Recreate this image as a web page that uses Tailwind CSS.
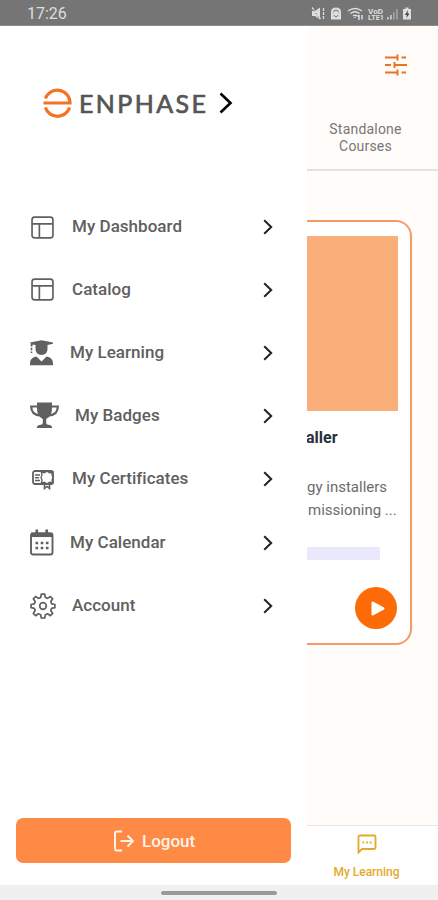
<!DOCTYPE html>
<html lang="en">
<head>
<meta charset="utf-8">
<title>My Learning</title>
<script src="https://cdn.jsdelivr.net/npm/@tailwindcss/browser@4"></script>
</head>
<body class="font-['Roboto',sans-serif]">
<svg class="hidden">
  <symbol id="chev" viewBox="0 0 10 16"><path d="M1.2 1.2 8.2 8l-7 6.8" fill="none" stroke="currentColor" stroke-width="2"/></symbol>
  <symbol id="board" viewBox="0 0 22 22"><g fill="none" stroke="currentColor" stroke-width="1.6"><rect x="1" y="1" width="20" height="20" rx="2.5"/><path d="M1 7.5h20M8 7.5V21"/></g></symbol>
</svg>
<div class="flex h-[900px] w-[438px] flex-col overflow-hidden bg-white">
  <header class="flex h-[26px] shrink-0 items-center justify-between border-b border-[#8d8d8d] bg-[#757575] pr-[25px] pl-[27px] text-[#dedede]">
    <span class="pt-[3px] text-[16px] leading-5">17:26</span>
    <svg class="mt-[2px] h-4 w-[102px]" viewBox="0 0 102 16" fill="currentColor">
      <path d="M1 5h3l5-3.500v12L4 10H1z"/><path d="M1 2l9 12" stroke="#757575" stroke-width="1"/><path d="M1 1.500l8.500 11.500M12.500 2v11" stroke="currentColor" stroke-width="1.300" stroke-dasharray="3 1"/>
      <path d="M20 6q0-4.500 5-4.500T30 6v7.500H20z"/><path d="M22.500 6.500a2.500 2.500 0 0 1 5 0M22.500 9l2.500 2 2.500-2" fill="none" stroke="#757575"/>
      <g fill="none" stroke="currentColor" stroke-width="1.500"><path d="M37 5q7-5 14 0M39.500 7.500q4.500-3.500 9 0M42 10q2-1.500 4 0"/><path d="M44 12v-1M48 14V9m-1.500 1.500L48 9M51 9v4.500"/></g>
      <text x="57" y="7.500" font-size="7" font-weight="700" textLength="15" lengthAdjust="spacingAndGlyphs">VoD</text><text x="57" y="14" font-size="7" font-weight="700" textLength="16" lengthAdjust="spacingAndGlyphs">LTE1</text>
      <path opacity=".8" d="M76 11h1.800v2.500H76zM79 9h1.800v4.500H79z"/><path opacity=".4" d="M82 6h1.800v7.500H82zM85 3h1.800v10.500H85z"/>
      <path d="M92 3h2.500V1.500h3V3h2.500v10.500h-8z"/><path fill="#444" d="M97 4l-3 5h1.800L95.500 12l3-4.500h-2z"/>
    </svg>
  </header>

  <div class="flex h-[859px] shrink-0">
    <aside class="flex w-[307px] shrink-0 flex-col bg-white text-[#606060]">
      <div class="mt-[58px] flex h-[38px] items-center pl-[43px]">
        <svg class="h-[30px] w-[29px] shrink-0" viewBox="0 0 29 30" fill="none" stroke="#f37320" stroke-width="3.200"><path d="M2.400 10.500A12.700 12.700 0 0 1 27 15H.5M2.400 19.500A12.700 12.700 0 0 0 26.600 19.500"/></svg>
        <span class="ml-[7px] w-[132px] font-['Lato',sans-serif] text-[25px] leading-[38px] font-normal tracking-[2.400px] whitespace-nowrap text-[#555] [-webkit-text-stroke:0.700px_#555]">ENPHASE</span>
        <svg class="ml-[8px] h-[22px] w-[14px] text-black" viewBox="0 0 14 22" fill="none" stroke="currentColor" stroke-width="2.600"><path d="m1.500 1.500 10 9.500-10 9.500"/></svg>
      </div>

      <nav class="mt-[74px] flex flex-col text-[17px] font-medium tracking-[0.030px]">
        <a class="flex h-[62px] items-center pr-[34px] pl-[31px]"><svg class="mr-[18px] h-[23px] w-[23px]"><use href="#board"/></svg><span>My Dashboard</span><svg class="ml-auto h-4 w-[10px] text-[#222]"><use href="#chev"/></svg></a>
        <a class="flex h-[63px] items-center pr-[34px] pl-[31px]"><svg class="mr-[18px] h-[23px] w-[23px]"><use href="#board"/></svg><span>Catalog</span><svg class="ml-auto h-4 w-[10px] text-[#222]"><use href="#chev"/></svg></a>
        <a class="flex h-[63px] items-center pr-[34px] pl-[30px]"><svg class="mr-[16px] h-[26px] w-6" viewBox="0 0 24 26" fill="currentColor"><path d="M0 2.500 11.500.2 23 2.500v1.300L17.500 5v4q0 5.500-6 6-6-.5-6-6V5L2.500 4.400V6M0 3.800z"/><path d="M1.500 4v9" fill="none" stroke="currentColor" stroke-width="1.600" stroke-dasharray="2.500 1.200"/><path d="M6.500 16.500 11.500 21.500 16.500 16.500q6.500 1 6.500 7v1.700H0v-1.700q0-6 6.500-7z"/></svg><span>My Learning</span><svg class="ml-auto h-4 w-[10px] text-[#222]"><use href="#chev"/></svg></a>
        <a class="flex h-[63px] items-center pr-[34px] pl-[30px]"><svg class="mr-[16px] h-[27px] w-[29px]" viewBox="0 0 29 27"><path fill="currentColor" d="M7 .5h15v6q0 8-5.800 10.500V21q0 1.500 2 1.800 4 .2 4 3.200H6.800q0-3 4-3.200 2-.3 2-1.800v-4Q7 14.500 7 6.500z"/><path d="M8 4.500H1.200q0 8 8.500 9M21 4.500h6.800q0 8-8.500 9" fill="none" stroke="currentColor" stroke-width="2.200"/></svg><span>My Badges</span><svg class="ml-auto h-4 w-[10px] text-[#222]"><use href="#chev"/></svg></a>
        <a class="flex h-[64px] items-center pr-[34px] pl-[32px]"><svg class="mr-[18px] h-[21px] w-[22px]" viewBox="0 0 22 21" fill="none" stroke="currentColor" stroke-width="1.800"><rect x="1" y="2" width="20" height="13" rx="2"/><path d="M3 6h5M3 8.700h4M3 11.400h5" stroke-width="1.500"/><path fill="#fff" stroke-width="1.300" d="m9.300 3 3 .8L15 2.300l2.700 1.500 3-.8-.7 3 1 2.500-1 2.500.7 3-3-.8-2.700 1.500-2.700-1.500-3 .8.700-3-1-2.500 1-2.500z"/><path d="M12.500 14.500v5l2.500-2 2.500 2v-5" stroke-width="1.600"/></svg><span>My Certificates</span><svg class="ml-auto h-4 w-[10px] text-[#222]"><use href="#chev"/></svg></a>
        <a class="flex h-[63px] items-center pr-[34px] pl-[30px]"><svg class="mr-[16px] h-[27px] w-6" viewBox="0 0 24 27" fill="none" stroke="currentColor"><rect x="1" y="4.500" width="21.500" height="21" rx="2" stroke-width="1.900"/><path d="M1 5.800h21.500" stroke-width="4.500"/><path d="M6.800.5v5M16.700.5v5" stroke-width="2.600"/><path d="M5.500 14h13M5.500 19h13" stroke-width="2.600" stroke-dasharray="2.600"/></svg><span>My Calendar</span><svg class="ml-auto h-4 w-[10px] text-[#222]"><use href="#chev"/></svg></a>
        <a class="flex h-[63px] items-center pr-[34px] pl-[30px]"><svg class="mr-[16px] h-[26px] w-[26px]" viewBox="0 0 26 26" fill="none" stroke="currentColor" stroke-width="1.700" stroke-linejoin="round"><path d="M11.300 1.200h3.400l.7 3.300 2.200.9 2.800-1.900 2.300 2.300-1.900 2.800.9 2.300 3.200.6v3.200l-3.200.6-.9 2.300 1.900 2.800-2.300 2.300-2.800-1.900-2.200.9-.7 3.300h-3.400l-.6-3.300-2.300-.9-2.800 1.900-2.300-2.300 1.900-2.800-.9-2.300-3.200-.6v-3.200l3.200-.6.900-2.300-1.900-2.800 2.300-2.300 2.800 1.900 2.300-.9z"/><circle cx="13" cy="13" r="3.300"/></svg><span>Account</span><svg class="ml-auto h-4 w-[10px] text-[#222]"><use href="#chev"/></svg></a>
      </nav>

      <button class="mx-4 mt-auto mb-[22px] flex h-[45px] w-[275px] items-center rounded-[7px] bg-[#ff8a45] pl-[97px] text-[17px] font-medium text-[#fff3e8]">
        <svg class="mr-[7px] h-[22px] w-[22px]" viewBox="0 0 22 22" fill="none" stroke="currentColor" stroke-width="2"><path d="M9 1.500H4q-2 0-2 2v15q0 2 2 2h5M7.500 11H20M14.500 5.500 20 11l-5.500 5.500"/></svg>
        <span class="pt-[2px]">Logout</span>
      </button>
    </aside>

    <main class="flex w-[131px] flex-col overflow-hidden bg-[#fffcf9]">
      <section class="flex h-[145px] shrink-0 flex-col border-b-2 border-[#e4e2e0]">
        <svg class="mt-[28px] ml-[78px] h-[22px] w-[22px] shrink-0" viewBox="0 0 22 22" fill="none" stroke="#e87524" stroke-width="2"><path d="M0 3.500h13M16.500 3.500H21M12.500.5v6M0 11h6M9 11h13M9.500 8v6M0 18.500h13M16.500 18.500H21M12.500 15.500v6"/></svg>
        <p class="mt-[45px] pr-[14px] text-center text-[14px] leading-[17px] tracking-[0.200px] text-[#777]">Standalone<br>Courses</p>
      </section>
      <article class="mt-[49px] flex h-[425px] w-[105px] shrink-0 flex-col rounded-r-[16px] border-2 border-l-0 border-[#f59a68] bg-white">
        <div class="mt-[14px] h-[175px] w-[91px] shrink-0 bg-[#faaf7b]"></div>
        <h2 class="mt-[17px] ml-[-1px] text-[16px] leading-[20px] font-bold text-[#28303b]">aller</h2>
        <p class="mt-[28px] text-[15px] leading-[23px] whitespace-nowrap text-[#6b6b6b]">gy installers<br><span class="ml-[1px]">missioning ...</span></p>
        <div class="mt-[25px] h-[13px] w-[73px] shrink-0 bg-[#eae8fc]"></div>
        <div class="mt-[27px] ml-[48px] flex h-[42px] w-[42px] shrink-0 items-center justify-center rounded-full bg-[#fd6b09]">
          <svg class="ml-[3px] h-[15px] w-[14px]" viewBox="0 0 14 15"><path d="M1.500 1.500v12l11-6z" fill="#fff" stroke="#fff" stroke-width="2" stroke-linejoin="round"/></svg>
        </div>
      </article>
      <footer class="mt-auto flex h-[60px] shrink-0 flex-col items-center border-t border-[#e5e5e5] bg-white pr-[12px] text-[#e4a92c]">
        <svg class="mt-[8px] h-[20px] w-[20px] shrink-0" viewBox="0 0 20 20" fill="none" stroke="currentColor" stroke-width="1.800"><path d="M1.500 18.500V3q0-1.500 1.500-1.500h14q1.500 0 1.500 1.500v10.500q0 1.500-1.500 1.500H5z"/><path d="M5.500 8.500h9" stroke-dasharray="1.800"/></svg>
        <span class="mt-[9px] text-[12px] leading-[18px] font-medium whitespace-nowrap">My Learning</span>
      </footer>
    </main>
  </div>
  <div class="flex h-[15px] shrink-0 justify-center bg-[#f0f0f0] pt-[6px]"><div class="h-[4px] w-[116px] rounded-full bg-[#999]"></div></div>
</div>
</body>
</html>
